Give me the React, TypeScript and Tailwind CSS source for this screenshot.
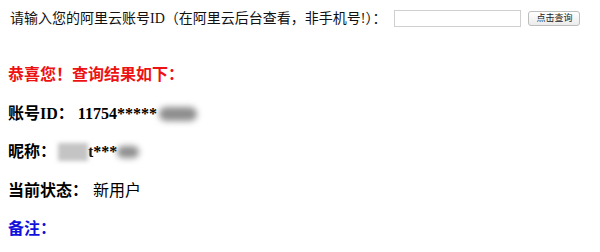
export default function App() {
  return (
    <div
      className="w-[600px] h-[252px] bg-white text-black overflow-hidden"
      style={{ fontFamily: '"Liberation Serif", "Noto Sans CJK SC", serif' }}
    >
      {/* query form */}
      <div className="flex items-center h-[36px] pl-[10px] text-[14px] text-[#111]">
        <span>请输入您的阿里云账号ID（在阿里云后台查看，非手机号!）：</span>
        <input
          type="text"
          className="ml-[8px] w-[127px] h-[17px] border border-[#cfcfcf] bg-white outline-none"
        />
        <button
          type="button"
          className="ml-[7px] w-[52px] h-[15px] rounded-[3px] border border-[#bdbdbd] bg-gradient-to-b from-white to-[#ececec] text-[9px] leading-none text-[#222]"
        >
          点击查询
        </button>
      </div>

      {/* result */}
      <div className="flex flex-col pl-[8px] pt-[20px] text-[16px] font-bold">
        <div className="flex items-center h-[38.5px] text-[#ee1111]">恭喜您！查询结果如下：</div>
        <div className="flex items-center h-[38.5px]">
          <span>账号ID：</span>
          <span className="ml-[4px]">11754*****</span>
          <span className="ml-[2px] w-[38px] h-[14px] rounded-full bg-[#8e8e8e] blur-[3px]" />
        </div>
        <div className="flex items-center h-[38.5px]">
          <span>昵称：</span>
          <span className="ml-[2px] w-[30px] h-[18px] bg-[#c4c4c4] blur-[2px]" />
          <span>t***</span>
          <span className="w-[22px] h-[12px] bg-[#8e8e8e] rounded-full blur-[3px]" />
        </div>
        <div className="flex items-center h-[38.5px]">
          <span>当前状态：</span>
          <span className="ml-[5px] font-normal">新用户</span>
        </div>
        <div className="flex items-center h-[38.5px] text-[#1111dd]">备注：</div>
      </div>
    </div>
  );
}
